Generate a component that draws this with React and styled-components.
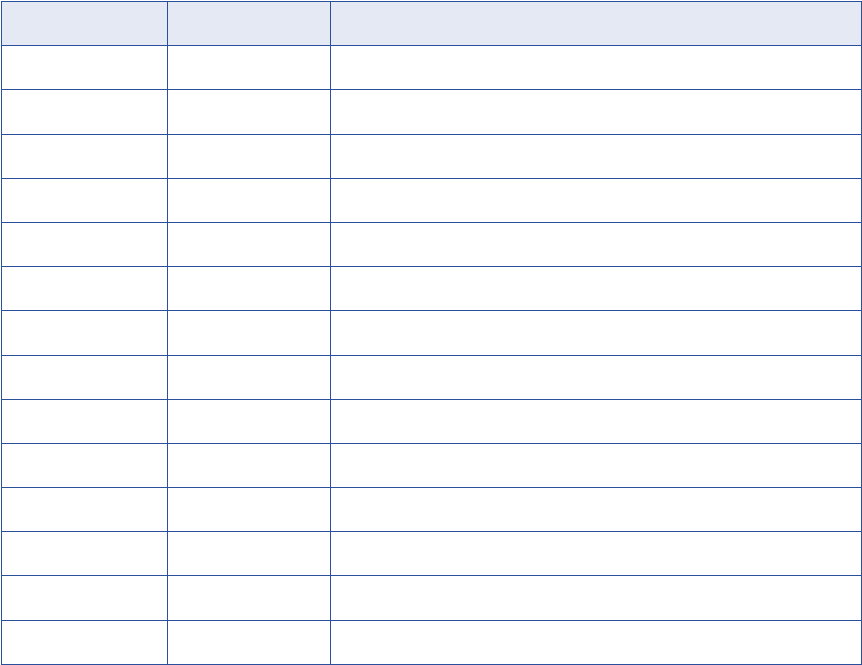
import React from "react";
import styled, { createGlobalStyle } from "styled-components";

const GlobalStyle = createGlobalStyle`
  html, body {
    margin: 0;
    padding: 0;
    background: #ffffff;
    font-family: "Liberation Sans", Arial, sans-serif;
  }
`;

const Page = styled.div`
  padding: 1px 0 0 1px;
`;

const Table = styled.table`
  border-collapse: collapse;
  width: 861px;
  height: 664px;
  table-layout: fixed;
`;

const HeadCell = styled.th`
  background-color: #e4e9f4;
  border: 1px solid #2a4f9d;
  width: ${({ $w }) => $w};
  padding: 0;
`;

const Cell = styled.td`
  border: 1px solid #2a4f9d;
  padding: 0;
  font-size: 13px;
`;

const Row = styled.tr`
  height: 44.2px;
`;

const columns = ["165px", "162px", "auto"];
const rows = Array.from({ length: 14 }, (_, i) => i);

export default function App() {
  return (
    <Page>
      <GlobalStyle />
      <Table>
        <thead>
          <Row>
            {columns.map((w, i) => (
              <HeadCell key={i} $w={w} />
            ))}
          </Row>
        </thead>
        <tbody>
          {rows.map((r) => (
            <Row key={r}>
              <Cell />
              <Cell />
              <Cell />
            </Row>
          ))}
        </tbody>
      </Table>
    </Page>
  );
}
